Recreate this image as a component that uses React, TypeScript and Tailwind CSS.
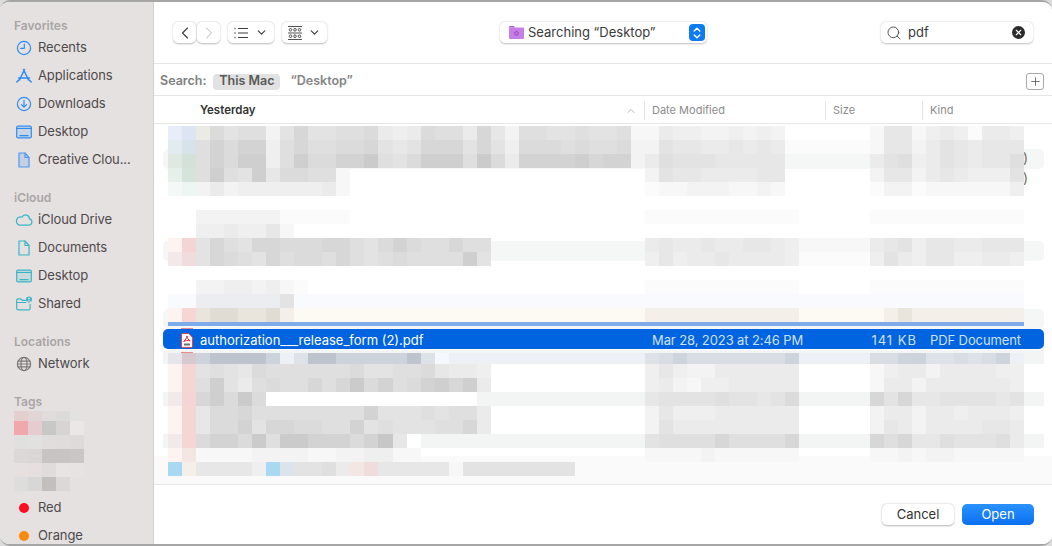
import { ChevronDown, ChevronLeft, ChevronRight, ChevronUp, Plus, Search, X } from 'lucide-react'
import type { ReactNode } from 'react'

const swatches: Record<string, string> = {
  '1': '#fbfbfb', '2': '#f7f7f7', '3': '#f3f3f3', '4': '#efefef', '5': '#ebebeb', '6': '#e7e7e7', '7': '#e3e3e3',
  '8': '#dfdfdf', '9': '#dbdbdb', a: '#d7d7d7', b: '#d3d3d3', c: '#cfcfcf', d: '#cbcbcb', e: '#c7c7c7',
  A: '#e8edf9', B: '#dde4f4', C: '#ebebe6', D: '#e2ebf0', E: '#d8e2ea', F: '#e0e8e2', G: '#d2e2d8', H: '#e6f0ea',
  I: '#d4e4da', J: '#f4f9f7', K: '#eef6f3', P: '#f4d4d4', Q: '#f2eaea', R: '#fdf3f0', S: '#f6d6d4', T: '#a8d8f2',
  U: '#dbe4ea', V: '#f0dcdc', W: '#f4e6e2', X: '#fdfaf3', Y: '#e9e4dc', Z: '#f4f0e9',
  g: '#e0dbd3', l: '#cdd3da', m: '#bec4cd', n: '#dde2e8', o: '#edf1f5', s: '#f5f8fc', t: '#d8c8d0', u: '#e6e6ea',
  v: '#d8dde4', w: '#ced4dc', x: '#f9fafd', y: '#ebedf1', z: '#ffffff',
}

// name cell columns, date columns, kind columns of each blurred row
const row = (name = '', date = '', kind = '') => name.padEnd(34, '0') + date.padEnd(16, '0') + kind

const rowsAbove = [
  row('ABC978837a77889545988' + '5a6388778778' + '2', '2544334343', '266' + '24541554'),
  row('DE8b9bb48a8899a767aaa' + '7a7499989889' + '3', '3766556565' + '111111', '266' + '35765666'),
  row('FG8b9cc48c99bbd879ccc' + '8d95bbbbcabb' + '3', '5877766666', '578' + '45765668'),
  row('HI8c87c6' + '9988' + '2', '3766555566', '366' + '35654447'),
  row('JK353444' + '4445' + '2', '1223332232', '133' + '12222224'),
  row(),
  row('00333333' + '1' + '1111', '11111111111', '11111111111'),
  row('00445446' + '2', '', ''),
  row('RP7a87aa' + '999aa879b988a88', '56556556654' + '22222', '56746655666'),
  row('QV7a987a' + '8998a87898888c7', '46455655554' + '11111', '47546644554'),
  row(),
  row('00334434' + '21', '11111111111', '11111111111'),
  row('xxyyyyyy7'.padEnd(34, 'x'), 'xxxxxxxxxxxxxxxx', 'xxxxxxxxxxx'),
  row('RSYggYYgZ'.padEnd(34, 'X'), 'ZZZZZZZZZZZXXXXX', 'XZYZZZZZZZZ'),
]

const firstRowBelow = row('utlmmmml' + 'onmmlllllmns' + 'oooooooooooooo', 'nvwvvvvvvvwooooo', 'vvwlnnvnvwo')

const rowsBelow = [
  row('RS' + '787698888889' + '778896554', '46433555555', '24553555544'),
  row('RS' + '8c75898' + '8a8ad9b89bcac5', '45324455555', '25535555554'),
  row('QPac9d9' + 'zzzzzzzzzzzzzzz', '67777877679', 'a7a66777767'),
  row('RS' + '699a88888888b77787885', '36444555555', '35535545554'),
  row('RS' + '699b7aa9988b7877788a5', '37555555555', '36535555665'),
  row('QS9bb9d8' + 'ddbbb9be6z', '78888a8888a', 'a8a66877785'),
  row('RW2222333322334422', '22223222222', '22323322222'),
  row('TZ66664TU' + '7785' + 'WV' + '66666' + '2' + '77777777'),
]

const tagCells = [
  ['#e4cfcf', '#e2d5d5', '#e0dcdc', '#dddada', '#e4e1e1'],
  ['#f0a8ac', '#e6ccce', '#c8c8c6', '#d8d4d4', '#ebe7e7'],
  ['#e0e0de', '#e3e0e0', '#e2dddd', '#e0dcdc', '#dfdada'],
  ['#dcd8d8', '#dad6d6', '#c8c4c4', '#c8c4c4', '#cac6c6'],
  ['#e6e1df', '#e5e0df', '#dfdcdb', '#e8e4e4', '#e8e3e3'],
  ['#dddddb', '#d8d6d6', '#c2bfbe', '#dcd8d8', '#e6e1e1'],
]

const BlurRow = ({ cells, short }: { cells: string; short?: boolean }) => (
  <div className={`grid grid-cols-[repeat(61,14.033px)] ${short ? 'h-[11px]' : 'h-[14px]'}`}>
    {cells.split('').map((c, i) => (
      <div key={i} style={{ backgroundColor: swatches[c] ?? 'transparent' }} />
    ))}
  </div>
)

const Icon = ({ children }: { children: ReactNode }) => (
  <svg viewBox="0 0 18 18" className="h-[18px] w-[18px] shrink-0" fill="none" stroke="currentColor" strokeWidth="1.2" strokeLinecap="round" strokeLinejoin="round">
    {children}
  </svg>
)

const RecentsIcon = () => (
  <Icon>
    <circle cx="9" cy="9" r="6.6" />
    <path d="M9.3 5v4.3H5.6" />
  </Icon>
)
const AppsIcon = () => (
  <Icon>
    <path d="M9.5 2.5 4.5 13M8.5 2.5l5 10.5M3.5 11h11M1.8 15l2-2M16.2 15l-2-2" strokeWidth="1.5" />
  </Icon>
)
const DownloadsIcon = () => (
  <Icon>
    <circle cx="9" cy="9" r="6.6" />
    <path d="M9 5.4v6.6M6.4 9.6 9 12.2l2.6-2.6" />
  </Icon>
)
const DesktopIcon = () => (
  <Icon>
    <rect x="1.7" y="3.2" width="14.6" height="11.6" rx="1.4" />
    <path d="M2 5.4h14M5 12.7h8" />
    <rect x="2" y="5.4" width="14" height="9" fill="currentColor" stroke="none" opacity="0.16" />
  </Icon>
)
const DocIcon = ({ filled }: { filled?: boolean }) => (
  <Icon>
    <path d="M4 2h6l4 4.5V16H4z" fill={filled ? 'currentColor' : 'none'} fillOpacity="0.22" />
    <path d="M10 2v4.5h4" />
  </Icon>
)
const CloudIcon = () => (
  <Icon>
    <path d="M4.6 14h9.2a3 3 0 0 0 .6-5.9 3.8 3.8 0 0 0-7.2-1.6A3.7 3.7 0 0 0 4.6 14z" transform="translate(-0.6 -0.6) scale(1.05)" />
  </Icon>
)
const SharedIcon = () => (
  <Icon>
    <path d="M1.7 5.2c0-.8.5-1.3 1.2-1.3h3l1.3 1.4h3.3M1.7 5.2v8.4c0 .7.5 1.2 1.2 1.2h11c.7 0 1.2-.5 1.2-1.2V9.4M1.7 7.5h9" />
    <circle cx="14" cy="4.6" r="3" fill="currentColor" stroke="none" />
    <circle cx="14" cy="3.5" r="0.9" fill="#e6e1e1" stroke="none" />
    <path d="M12.4 6.4c.3-1 2.9-1 3.2 0" stroke="#e6e1e1" strokeWidth="0.9" />
  </Icon>
)
const NetworkIcon = () => (
  <Icon>
    <circle cx="9" cy="9" r="6.6" />
    <ellipse cx="9" cy="9" rx="3" ry="6.6" />
    <path d="M3 6.2h12M3 11.8h12M2.4 9h13.2" />
  </Icon>
)

const Heading = ({ label, first }: { label: string; first?: boolean }) => (
  <div className={`h-[14px] shrink-0 pl-[14px] text-[12px] leading-[14px] font-semibold text-[#a9a5a5] ${first ? '' : 'mt-[18px]'}`}>{label}</div>
)

const SideItem = ({ icon, label, color }: { icon: ReactNode; label: string; color: string }) => (
  <div className="flex h-[28px] shrink-0 items-center pt-[2px] text-[13px] tracking-[-0.1px] text-[#4d4a4a]">
    <span className={`flex w-[38px] shrink-0 justify-center pl-[10px] ${color}`}>{icon}</span>
    <span>{label}</span>
  </div>
)

const TagDot = ({ color, label }: { color: string; label: string }) => (
  <div className="flex h-[28px] shrink-0 items-center pt-[2px] text-[13px] tracking-[-0.1px] text-[#4d4a4a]">
    <span className="flex w-[38px] justify-center pl-[10px]">
      <span className={`h-[10px] w-[10px] rounded-full ${color}`} />
    </span>
    <span>{label}</span>
  </div>
)

const Sidebar = () => (
  <aside className="flex w-[154px] shrink-0 flex-col overflow-hidden border-r border-[#d2cfcf] bg-[#e6e1e1] pt-[17px]">
    <Heading label="Favorites" first />
    <SideItem icon={<RecentsIcon />} label="Recents" color="text-[#2c8cf4]" />
    <SideItem icon={<AppsIcon />} label="Applications" color="text-[#2c8cf4]" />
    <SideItem icon={<DownloadsIcon />} label="Downloads" color="text-[#2c8cf4]" />
    <SideItem icon={<DesktopIcon />} label="Desktop" color="text-[#2c8cf4]" />
    <SideItem icon={<DocIcon filled />} label="Creative Clou..." color="text-[#4f97ee]" />
    <Heading label="iCloud" />
    <SideItem icon={<CloudIcon />} label="iCloud Drive" color="text-[#38b6c8]" />
    <SideItem icon={<DocIcon />} label="Documents" color="text-[#38b6c8]" />
    <SideItem icon={<DesktopIcon />} label="Desktop" color="text-[#38b6c8]" />
    <SideItem icon={<SharedIcon />} label="Shared" color="text-[#38b6c8]" />
    <Heading label="Locations" />
    <SideItem icon={<NetworkIcon />} label="Network" color="text-[#7b7878]" />
    <Heading label="Tags" />
    <div className="mt-[2px] ml-[14px] grid w-[70px] shrink-0 grid-cols-5 grid-rows-[10px_repeat(5,14px)]">
      {tagCells.flat().map((c, i) => (
        <div key={i} style={{ backgroundColor: c }} />
      ))}
    </div>
    <div className="mt-[2px] flex flex-col">
      <TagDot color="bg-[#fa0f22]" label="Red" />
      <TagDot color="bg-[#f98a0b]" label="Orange" />
    </div>
  </aside>
)

const ToolButton = ({ children, className }: { children: ReactNode; className: string }) => (
  <div className={`flex h-[21px] items-center justify-center rounded-[5px] bg-white shadow-[0_0.5px_2px_rgba(0,0,0,0.28)] ${className}`}>{children}</div>
)

const Toolbar = () => (
  <div className="flex h-[61px] shrink-0 items-center pr-[19px] pl-[19px]">
    <ToolButton className="w-[23px] text-[#3f3f3f]">
      <ChevronLeft size={20} strokeWidth={1.4} />
    </ToolButton>
    <ToolButton className="ml-px w-[23px] text-[#b5b5b5]">
      <ChevronRight size={20} strokeWidth={1.2} />
    </ToolButton>
    <ToolButton className="ml-[8px] w-[46px] gap-[7px] text-[#3f3f3f]">
      <svg viewBox="0 0 14 12" className="h-[12px] w-[14px]" fill="none" stroke="currentColor" strokeWidth="1">
        <path d="M4 1.5h10M4 6h10M4 10.5h10" />
        <path d="M.5 1.5h1M.5 6h1M.5 10.5h1" strokeWidth="1.4" />
      </svg>
      <ChevronDown size={13} strokeWidth={2.2} />
    </ToolButton>
    <ToolButton className="ml-[8px] w-[45px] gap-[6px] text-[#3f3f3f]">
      <svg viewBox="0 0 14 14" className="h-[14px] w-[14px]" fill="none" stroke="currentColor" strokeWidth="0.9">
        <path d="M0 .5h14M0 7h14M0 13.5h14" />
        <circle cx="2.5" cy="3.8" r="1.3" />
        <circle cx="7" cy="3.8" r="1.3" />
        <circle cx="11.5" cy="3.8" r="1.3" />
        <circle cx="2.5" cy="10.2" r="1.3" />
        <circle cx="7" cy="10.2" r="1.3" />
        <circle cx="11.5" cy="10.2" r="1.3" />
      </svg>
      <ChevronDown size={13} strokeWidth={2.2} />
    </ToolButton>
    <div className="ml-[173px] flex h-[21px] w-[207px] items-center rounded-[5px] bg-white pr-[2px] pl-[9px] shadow-[0_0.5px_2px_rgba(0,0,0,0.25)]">
      <svg viewBox="0 0 15 15" className="h-[15px] w-[15px] shrink-0">
        <path d="M0 2.2C0 1.5.5 1 1.2 1h3.600l1.400 1.400H0z" fill="#a855d8" />
        <rect y="2.4" width="15" height="11.6" rx="1" fill="#c77ee6" />
        <circle cx="7.5" cy="8.4" r="1.8" fill="none" stroke="#8a3fb4" strokeWidth="0.9" />
      </svg>
      <span className="ml-[4px] flex-1 text-[13px] text-[#3a3a3a]">Searching “Desktop”</span>
      <span className="flex h-[17px] w-[16px] items-center justify-center rounded-[4px] bg-[#0f7bf0]">
        <svg viewBox="0 0 10 14" className="h-[14px] w-[10px]" fill="none" stroke="#fff" strokeWidth="1.4" strokeLinecap="round" strokeLinejoin="round">
          <path d="M2.2 5 5 2.2 7.8 5M2.2 9 5 11.8 7.8 9" />
        </svg>
      </span>
    </div>
    <div className="ml-auto flex h-[21px] w-[152px] items-center rounded-[5px] bg-white pr-[8px] pl-[5px] shadow-[0_0.5px_2px_rgba(0,0,0,0.25)]">
      <Search size={16} strokeWidth={1.3} className="text-[#3a3a3a]" />
      <span className="ml-[6px] flex-1 text-[13px] text-[#3a3a3a]">pdf</span>
      <span className="flex h-[13px] w-[13px] items-center justify-center rounded-full bg-[#2b2b2b] text-white">
        <X size={9} strokeWidth={3} />
      </span>
    </div>
  </div>
)

const ScopeBar = () => (
  <div className="flex h-[33px] shrink-0 items-center border-y border-[#e6e6e6] pt-[4px] pr-[8px] pl-[6px] text-[12.5px] font-semibold">
    <span className="text-[#7f7f7f]">Search:</span>
    <span className="ml-[7px] flex h-[16px] w-[67px] items-center justify-center rounded-[4px] bg-[#e2e2e2] text-[#595959]">This Mac</span>
    <span className="ml-[10px] text-[#868686]">“Desktop”</span>
    <span className="ml-auto flex h-[17px] w-[18px] items-center justify-center rounded-[3px] border border-[#a8a8a8] text-[#4a4a4a]">
      <Plus size={13} strokeWidth={1.4} />
    </span>
  </div>
)

const HeaderRow = () => (
  <div className="mr-[8px] ml-[9px] grid h-[27px] shrink-0 grid-cols-[481px_181px_97px_1fr] items-center pt-[2px] text-[11px] text-[#8c8c8c]">
    <div className="flex items-center justify-between pr-[7px] pl-[37px]">
      <span className="text-[11.5px] font-semibold text-[#333333]">Yesterday</span>
      <ChevronUp size={12} strokeWidth={1.5} className="text-[#a0a0a0]" />
    </div>
    <div className="border-l border-[#e4e4e4] pl-[7px] leading-[19px]">Date Modified</div>
    <div className="border-l border-[#e4e4e4] pl-[7px] leading-[19px]">Size</div>
    <div className="border-l border-[#e4e4e4] pl-[7px] leading-[19px]">Kind</div>
  </div>
)

const PdfIcon = () => (
  <svg viewBox="0 0 12 15" className="h-[15px] w-[12px]">
    <path d="M.6 1.400C.6.9 1 .6 1.400.6h6.400l3.600 3.600v9.400c0 .5-.4.8-.8.8H1.400c-.4 0-.8-.3-.8-.8z" fill="#fff" stroke="#d8443f" strokeWidth="1" />
    <path d="M6 3c-.6 2.400-1.400 3.800-3.400 5.400 2-.8 4.400-1 6.600-.6C7.400 7 6.400 5.400 6 3z" fill="none" stroke="#d8232a" strokeWidth="1" />
    <rect x="3" y="10.5" width="6" height="2" fill="#6e6e6e" />
  </svg>
)

const SelectedRow = () => (
  <div className="mr-[8px] ml-[9px] grid h-[20px] shrink-0 grid-cols-[481px_181px_97px_1fr] items-center rounded-[5px] bg-[#0064e1] pt-[2px] text-[13px] text-[#cfe0f9]">
    <div className="flex items-center pl-[18px] text-white">
      <PdfIcon />
      <span className="ml-[7px]">authorization___release_form (2).pdf</span>
    </div>
    <div className="pl-[8px] tracking-[-0.1px]">Mar 28, 2023 at 2:46 PM</div>
    <div className="pr-[5px] text-right tracking-[1px]">141 KB</div>
    <div className="pl-[8px] tracking-[-0.1px]">PDF Document</div>
  </div>
)

const FileList = () => (
  <div className="relative flex-1 overflow-hidden">
    {/* alternating row stripes behind the blurred names */}
    <div className="absolute top-[25px] right-[8px] left-[9px] h-[20px] rounded-[5px] bg-[#f5f6f6]" />
    <div className="absolute top-[117px] right-[8px] left-[9px] h-[20px] rounded-[5px] bg-[#f5f6f6]" />
    <div className="absolute top-[185px] right-[8px] left-[9px] h-[20px] rounded-[5px] bg-[#f5f6f6]" />
    <div className="absolute top-[226px] right-[8px] left-[9px] h-[14px] bg-[#f3f5f5]" />
    <div className="absolute top-[268px] right-[8px] left-[9px] h-[14px] bg-[#f3f5f5]" />
    <div className="absolute top-[310px] right-[8px] left-[9px] h-[14px] bg-[#f3f5f5]" />
    <div className="absolute top-[332px] right-0 bottom-0 left-0 bg-[#fafafa]" />
    <span className="absolute top-[26px] left-[869px] text-[14px] leading-[16px] text-[#6e6e6e]">)</span>
    <span className="absolute top-[46px] left-[869px] text-[14px] leading-[16px] text-[#6e6e6e]">)</span>

    <div className="relative flex flex-col pt-[2px]">
      <div className="ml-[14px]">
        {rowsAbove.map((r, i) => (
          <BlurRow key={i} cells={r} />
        ))}
      </div>
      <div className="ml-[14px] h-[4px] w-[856px] bg-[#7dabec]" />
      <div className="ml-[27px] h-[3px] w-[12px] border-b border-[#e88a88]" />
      <SelectedRow />
      <div className="ml-[27px] h-[4px] w-[12px] border-b border-[#e88a88]" />
      <div className="ml-[14px]">
        <BlurRow cells={firstRowBelow} short />
        {rowsBelow.map((r, i) => (
          <BlurRow key={i} cells={r} />
        ))}
      </div>
    </div>
  </div>
)

const Footer = () => (
  <div className="flex h-[60px] shrink-0 items-center justify-end gap-[8px] border-t border-[#e6e6e6] bg-white pr-[18px] text-[13px]">
    <button className="h-[21px] w-[72px] rounded-[5px] bg-white text-[#333333] shadow-[0_0.5px_2px_rgba(0,0,0,0.3)]">Cancel</button>
    <button className="h-[21px] w-[72px] rounded-[5px] bg-gradient-to-b from-[#2a92ff] to-[#0a6ff0] text-white">Open</button>
  </div>
)

export default function App() {
  return (
    <div className="h-[546px] w-[1052px] overflow-hidden bg-[#dcdcdc] font-['Inter','Liberation_Sans',sans-serif]">
      <div className="flex h-full overflow-hidden rounded-[10px] border-y-2 border-[#a6a6a6] bg-white">
        <Sidebar />
        <main className="flex min-w-0 flex-1 flex-col">
          <Toolbar />
          <ScopeBar />
          <HeaderRow />
          <div className="h-px shrink-0 bg-[#e6e6e6]" />
          <FileList />
          <Footer />
        </main>
      </div>
    </div>
  )
}
